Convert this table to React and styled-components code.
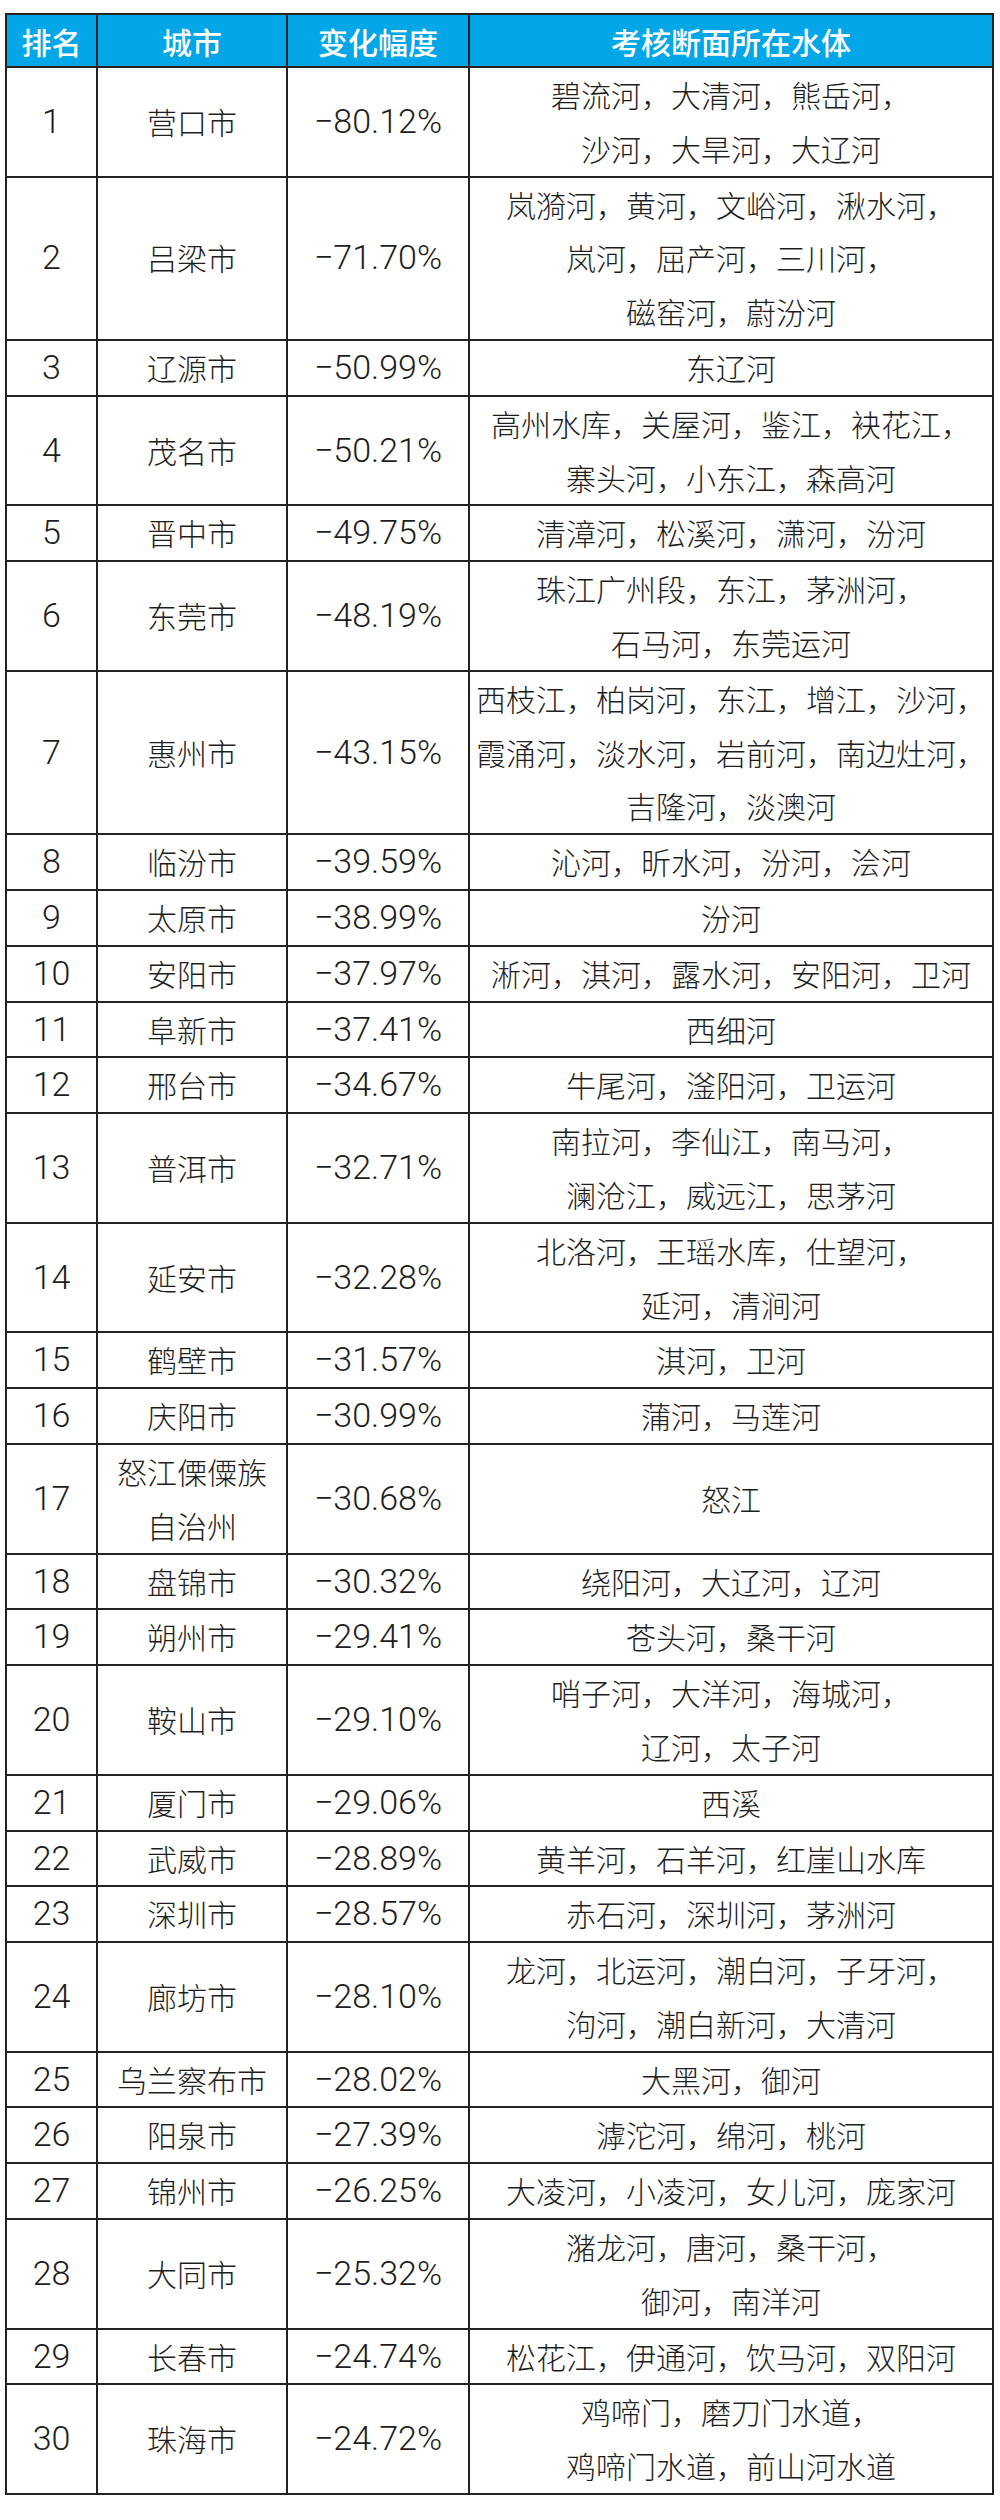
import React from 'react';
import styled, { createGlobalStyle } from 'styled-components';

const GlobalStyle = createGlobalStyle`
  html, body {
    margin: 0;
    padding: 0;
    background: #ffffff;
  }
  body {
    font-family: 'Roboto', 'Noto Sans CJK SC', sans-serif;
    color: #1e1e1e;
  }
`

const Page = styled.div`
  width: 1000px;
  padding: 13px 0 0 5px;
  box-sizing: border-box;
`

const Table = styled.table`
  border-collapse: collapse;
  table-layout: fixed;
  width: 987px;
  border: 2px solid #222;
`

const HeadCell = styled.th`
  height: 51px;
  padding: 0;
  background: #03a6e6;
  color: #ffffff;
  font-family: 'Noto Sans CJK SC', sans-serif;
  font-size: 30px;
  font-weight: 500;
  text-align: center;
  vertical-align: middle;
  border: 2px solid #222;
`

const Cell = styled.td`
  padding: 0;
  text-align: center;
  vertical-align: middle;
  border: 2px solid #222;
  white-space: nowrap;
  line-height: 53.8px;
  font-family: ${p => (p.$num ? "'Roboto', sans-serif" : "'Noto Sans CJK SC', sans-serif")};
  font-size: ${p => (p.$num ? '34px' : '30px')};
  font-weight: 300;
`

const Line = styled.div`
  display: block;
`

const rows = [
  [1, ['营口市'], '−80.12%', ['碧流河，大清河，熊岳河，', '沙河，大旱河，大辽河']],
  [2, ['吕梁市'], '−71.70%', ['岚漪河，黄河，文峪河，湫水河，', '岚河，屈产河，三川河，', '磁窑河，蔚汾河']],
  [3, ['辽源市'], '−50.99%', ['东辽河']],
  [4, ['茂名市'], '−50.21%', ['高州水库，关屋河，鉴江，袂花江，', '寨头河，小东江，森高河']],
  [5, ['晋中市'], '−49.75%', ['清漳河，松溪河，潇河，汾河']],
  [6, ['东莞市'], '−48.19%', ['珠江广州段，东江，茅洲河，', '石马河，东莞运河']],
  [7, ['惠州市'], '−43.15%', ['西枝江，柏岗河，东江，增江，沙河，', '霞涌河，淡水河，岩前河，南边灶河，', '吉隆河，淡澳河']],
  [8, ['临汾市'], '−39.59%', ['沁河，昕水河，汾河，浍河']],
  [9, ['太原市'], '−38.99%', ['汾河']],
  [10, ['安阳市'], '−37.97%', ['淅河，淇河，露水河，安阳河，卫河']],
  [11, ['阜新市'], '−37.41%', ['西细河']],
  [12, ['邢台市'], '−34.67%', ['牛尾河，滏阳河，卫运河']],
  [13, ['普洱市'], '−32.71%', ['南拉河，李仙江，南马河，', '澜沧江，威远江，思茅河']],
  [14, ['延安市'], '−32.28%', ['北洛河，王瑶水库，仕望河，', '延河，清涧河']],
  [15, ['鹤壁市'], '−31.57%', ['淇河，卫河']],
  [16, ['庆阳市'], '−30.99%', ['蒲河，马莲河']],
  [17, ['怒江傈僳族', '自治州'], '−30.68%', ['怒江']],
  [18, ['盘锦市'], '−30.32%', ['绕阳河，大辽河，辽河']],
  [19, ['朔州市'], '−29.41%', ['苍头河，桑干河']],
  [20, ['鞍山市'], '−29.10%', ['哨子河，大洋河，海城河，', '辽河，太子河']],
  [21, ['厦门市'], '−29.06%', ['西溪']],
  [22, ['武威市'], '−28.89%', ['黄羊河，石羊河，红崖山水库']],
  [23, ['深圳市'], '−28.57%', ['赤石河，深圳河，茅洲河']],
  [24, ['廊坊市'], '−28.10%', ['龙河，北运河，潮白河，子牙河，', '泃河，潮白新河，大清河']],
  [25, ['乌兰察布市'], '−28.02%', ['大黑河，御河']],
  [26, ['阳泉市'], '−27.39%', ['滹沱河，绵河，桃河']],
  [27, ['锦州市'], '−26.25%', ['大凌河，小凌河，女儿河，庞家河']],
  [28, ['大同市'], '−25.32%', ['潴龙河，唐河，桑干河，', '御河，南洋河']],
  [29, ['长春市'], '−24.74%', ['松花江，伊通河，饮马河，双阳河']],
  [30, ['珠海市'], '−24.72%', ['鸡啼门，磨刀门水道，', '鸡啼门水道，前山河水道']],
]

function App() {
  return (
    <Page>
      <GlobalStyle />
      <Table>
        <colgroup>
          <col style={{ width: 91 }} />
          <col style={{ width: 190 }} />
          <col style={{ width: 182 }} />
          <col style={{ width: 524 }} />
        </colgroup>
        <thead>
          <tr>
            <HeadCell>排名</HeadCell>
            <HeadCell>城市</HeadCell>
            <HeadCell>变化幅度</HeadCell>
            <HeadCell>考核断面所在水体</HeadCell>
          </tr>
        </thead>
        <tbody>
          {rows.map(([rank, city, change, waters]) => (
            <tr key={rank}>
              <Cell $num>{rank}</Cell>
              <Cell>
                {city.map(c => <Line key={c}>{c}</Line>)}
              </Cell>
              <Cell $num>{change}</Cell>
              <Cell>
                {waters.map(w => <Line key={w}>{w}</Line>)}
              </Cell>
            </tr>
          ))}
        </tbody>
      </Table>
    </Page>
  );
}

export default App;
